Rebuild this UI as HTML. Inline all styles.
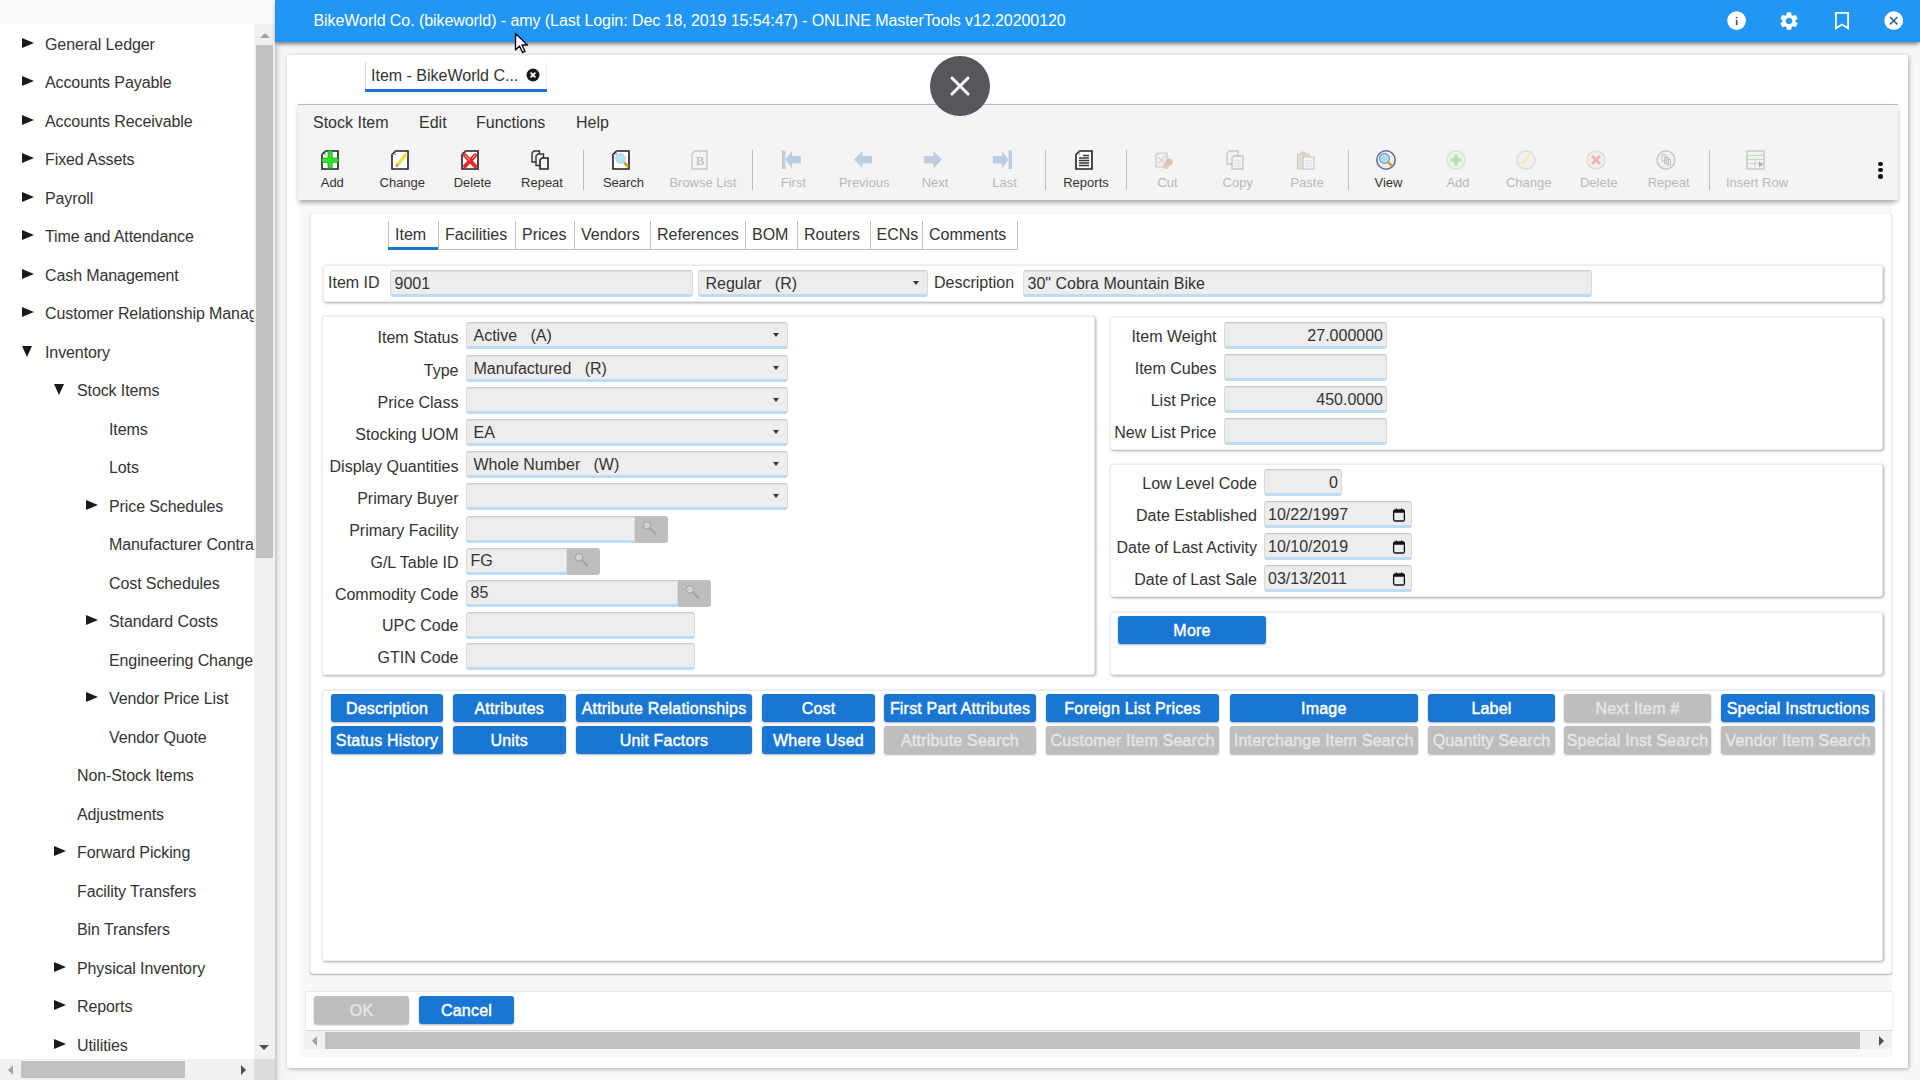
<!DOCTYPE html>
<html><head><meta charset="utf-8"><style>

*{box-sizing:border-box;margin:0;padding:0}
html,body{width:1920px;height:1080px;overflow:hidden}
body{position:relative;background:#f7f7f7;font-family:"Liberation Sans",sans-serif;font-size:16px;color:#333}
.abs{position:absolute}
/* sidebar */
#side{position:absolute;left:0;top:0;width:275px;height:1080px;background:#fff;overflow:hidden}
#side .strip{position:absolute;left:0;top:0;width:275px;height:24px;background:#f9f9f9}
#side .it{position:absolute;white-space:nowrap;height:20px;line-height:20px;color:#333;letter-spacing:-0.1px}
#side .tri{position:absolute;width:0;height:0}
#side .tr{border-left:12px solid #1a1a1a;border-top:5.6px solid transparent;border-bottom:5.6px solid transparent}
#side .td{border-top:11.5px solid #1a1a1a;border-left:5.8px solid transparent;border-right:5.8px solid transparent}
#vs{position:absolute;left:254px;top:24px;width:21px;height:1035px;background:#f1f1f1}
#vthumb{position:absolute;left:256px;top:45px;width:17px;height:513px;background:#c1c1c1}
#hs{position:absolute;left:0;top:1059px;width:254px;height:21px;background:#f1f1f1}
#hthumb{position:absolute;left:21px;top:1061px;width:164px;height:17px;background:#c1c1c1}
#corner{position:absolute;left:254px;top:1059px;width:21px;height:21px;background:#dcdcdc}
#sideshadow{position:absolute;left:275px;top:0;width:12px;height:1080px;background:linear-gradient(to right,#c6c6c6 0,#e6e6e6 3px,#f4f4f4 6px,#f7f7f7 12px)}
/* header */
#hdr{position:absolute;left:275px;top:0;width:1645px;height:42px;background:#2196f3;box-shadow:0 3px 4px -1px rgba(0,0,0,.5);color:#fff;z-index:3}
#hdr .t{position:absolute;left:38.5px;top:11px;line-height:20px;white-space:nowrap;letter-spacing:-0.07px}
/* main panel */
#main{position:absolute;left:287px;top:55px;width:1621px;height:1013px;background:#fff;box-shadow:1px 1px 4px rgba(0,0,0,.3);border-radius:2px}
.panel{position:absolute;background:#fff;border-radius:3px;box-shadow:1px 1px 3px rgba(0,0,0,.35);border:1px solid #ececec}
.lbl{position:absolute;white-space:nowrap;line-height:20px;color:#333}
.r{text-align:right}
.inp{position:absolute;background:#ededed;border-radius:3px;border:1px solid #dadada;border-top-color:#cacaca;border-bottom:3px solid #bddcf4;box-shadow:inset 0 1px 1px rgba(0,0,0,.06);white-space:nowrap;line-height:22px;padding-top:1.5px;padding-left:3.5px;color:#333}
.inp.sel{padding-left:6.5px}
.sel::after{content:"";position:absolute;right:8px;top:10px;border-top:4px solid #333;border-left:3.5px solid transparent;border-right:3.5px solid transparent}
.lk{position:absolute;background:#bdbdbd;border-radius:0 3px 3px 0}
.btn{position:absolute;background:#1976d2;color:#fff;text-align:center;line-height:26px;padding-top:2px;border-radius:3px;white-space:nowrap;box-shadow:0 1px 2px rgba(0,0,0,.3);-webkit-text-stroke:0.45px #fff;letter-spacing:0.2px}
.btn.dis{-webkit-text-stroke:0.45px #e6e6e6}
.btn.dis{background:#bdbdbd;color:#e6e6e6}
/* toolbar */
.tb{position:absolute;text-align:center;font-size:13px;white-space:nowrap;color:#333}
.tb.d{color:#b8b8b8}
.sep{position:absolute;top:150px;width:1px;height:40px;background:#bcbcbc}
.tab{position:absolute;top:221px;height:29px;line-height:28px;text-align:left;padding-left:6px;white-space:nowrap;border-left:1px solid #c0c0c0;border-bottom:1px solid #c0c0c0;color:#333}

</style></head><body>
<div id="side"><div class="strip"></div>
<div class="it" style="left:45px;top:34.5px">General Ledger</div>
<div class="tri tr" style="left:21.5px;top:37.8px"></div>
<div class="it" style="left:45px;top:73.0px">Accounts Payable</div>
<div class="tri tr" style="left:21.5px;top:76.3px"></div>
<div class="it" style="left:45px;top:111.5px">Accounts Receivable</div>
<div class="tri tr" style="left:21.5px;top:114.8px"></div>
<div class="it" style="left:45px;top:150.0px">Fixed Assets</div>
<div class="tri tr" style="left:21.5px;top:153.3px"></div>
<div class="it" style="left:45px;top:188.5px">Payroll</div>
<div class="tri tr" style="left:21.5px;top:191.8px"></div>
<div class="it" style="left:45px;top:227.0px">Time and Attendance</div>
<div class="tri tr" style="left:21.5px;top:230.3px"></div>
<div class="it" style="left:45px;top:265.5px">Cash Management</div>
<div class="tri tr" style="left:21.5px;top:268.8px"></div>
<div class="it" style="left:45px;top:304.0px">Customer Relationship Management</div>
<div class="tri tr" style="left:21.5px;top:307.3px"></div>
<div class="it" style="left:45px;top:342.5px">Inventory</div>
<div class="tri td" style="left:21.5px;top:345.8px"></div>
<div class="it" style="left:77px;top:381.0px">Stock Items</div>
<div class="tri td" style="left:53.5px;top:384.3px"></div>
<div class="it" style="left:109px;top:419.5px">Items</div>
<div class="it" style="left:109px;top:458.0px">Lots</div>
<div class="it" style="left:109px;top:496.5px">Price Schedules</div>
<div class="tri tr" style="left:85.5px;top:499.8px"></div>
<div class="it" style="left:109px;top:535.0px">Manufacturer Contracts</div>
<div class="it" style="left:109px;top:573.5px">Cost Schedules</div>
<div class="it" style="left:109px;top:612.0px">Standard Costs</div>
<div class="tri tr" style="left:85.5px;top:615.3px"></div>
<div class="it" style="left:109px;top:650.5px">Engineering Change</div>
<div class="it" style="left:109px;top:689.0px">Vendor Price List</div>
<div class="tri tr" style="left:85.5px;top:692.3px"></div>
<div class="it" style="left:109px;top:727.5px">Vendor Quote</div>
<div class="it" style="left:77px;top:766.0px">Non-Stock Items</div>
<div class="it" style="left:77px;top:804.5px">Adjustments</div>
<div class="it" style="left:77px;top:843.0px">Forward Picking</div>
<div class="tri tr" style="left:53.5px;top:846.3px"></div>
<div class="it" style="left:77px;top:881.5px">Facility Transfers</div>
<div class="it" style="left:77px;top:920.0px">Bin Transfers</div>
<div class="it" style="left:77px;top:958.5px">Physical Inventory</div>
<div class="tri tr" style="left:53.5px;top:961.8px"></div>
<div class="it" style="left:77px;top:997.0px">Reports</div>
<div class="tri tr" style="left:53.5px;top:1000.3px"></div>
<div class="it" style="left:77px;top:1035.5px">Utilities</div>
<div class="tri tr" style="left:53.5px;top:1038.8px"></div>
</div>
<div id="vs"></div><div id="vthumb"></div>
<div id="hs"></div><div id="hthumb"></div><div id="corner"></div>
<div class="abs" style="left:260px;top:33px;width:0;height:0;border-bottom:5px solid #a3a3a3;border-left:5px solid transparent;border-right:5px solid transparent"></div>
<div class="abs" style="left:259px;top:1045px;width:0;height:0;border-top:5px solid #505050;border-left:5px solid transparent;border-right:5px solid transparent"></div>
<div class="abs" style="left:8px;top:1065px;width:0;height:0;border-right:5px solid #a3a3a3;border-top:5px solid transparent;border-bottom:5px solid transparent"></div>
<div class="abs" style="left:241px;top:1065px;width:0;height:0;border-left:5px solid #505050;border-top:5px solid transparent;border-bottom:5px solid transparent"></div>
<div id="sideshadow"></div>
<div id="hdr"><div class="t">BikeWorld Co. (bikeworld) - amy (Last Login: Dec 18, 2019 15:54:47) - ONLINE MasterTools v12.20200120</div>
<svg class="abs" style="left:1452px;top:11px" width="20" height="20" viewBox="0 0 20 20"><circle cx="9.6" cy="9.6" r="9.4" fill="#fff"/><rect x="8.85" y="8.9" width="1.6" height="5.2" fill="#2a5a86"/><circle cx="9.65" cy="6.6" r="0.95" fill="#2a5a86"/></svg>
<svg class="abs" style="left:1503px;top:9.6px" width="22" height="22" viewBox="0 0 24 24"><path fill="#fff" d="M19.14 12.94c.04-.3.06-.61.06-.94 0-.32-.02-.64-.07-.94l2.03-1.58a.49.49 0 0 0 .12-.61l-1.92-3.32a.488.488 0 0 0-.59-.22l-2.39.96c-.5-.38-1.03-.7-1.62-.94l-.36-2.54a.484.484 0 0 0-.48-.41h-3.84c-.24 0-.43.17-.47.41l-.36 2.54c-.59.24-1.13.57-1.62.94l-2.39-.96c-.22-.08-.47 0-.59.22L2.74 8.87c-.12.21-.08.47.12.61l2.03 1.58c-.05.3-.09.63-.09.94s.02.64.07.94l-2.03 1.58a.49.49 0 0 0-.12.61l1.92 3.32c.12.22.37.29.59.22l2.39-.96c.5.38 1.03.7 1.62.94l.36 2.54c.05.24.24.41.48.41h3.84c.24 0 .44-.17.47-.41l.36-2.54c.59-.24 1.13-.56 1.62-.94l2.39.96c.22.08.47 0 .59-.22l1.92-3.32c.12-.22.07-.47-.12-.61l-2.01-1.58zM12 15.6c-1.98 0-3.6-1.62-3.6-3.6s1.62-3.6 3.6-3.6 3.6 1.62 3.6 3.6-1.62 3.6-3.6 3.6z"/></svg>
<svg class="abs" style="left:1559.5px;top:12px" width="14" height="17.5" viewBox="0 0 14 17.5"><path fill="none" stroke="#fff" stroke-width="1.8" d="M0.9 0.9H13.1V16.3L7 12.6L0.9 16.3Z"/></svg>
<svg class="abs" style="left:1609px;top:11px" width="20" height="20" viewBox="0 0 20 20"><circle cx="9.7" cy="9.7" r="9.4" fill="#fff"/><path d="M6 6L13.4 13.4M13.4 6L6 13.4" stroke="#2a6598" stroke-width="1.5"/></svg>
</div>
<svg class="abs" style="left:514px;top:32px;z-index:20" width="14" height="22" viewBox="0 0 14 22"><path d="M1.5 1.5V18L5.5 14L8.5 20.5L11 19.3L8 13H13.5Z" fill="#fff" stroke="#0a0a1e" stroke-width="1.4" stroke-linejoin="round"/></svg>
<div id="main"></div>
<div class="abs" style="left:365px;top:62px;width:182px;height:28px;border-left:1px solid #d8d8d8;border-right:1px solid #ececec"></div>
<div class="abs" style="left:365px;top:89px;width:182px;height:3px;background:#1976d2"></div>
<div class="lbl" style="left:371px;top:66px">Item - BikeWorld C...</div>
<svg class="abs" style="left:526px;top:68px" width="14" height="14" viewBox="0 0 14 14"><circle cx="7" cy="7" r="6.5" fill="#1a1a1a"/><path d="M4.6 4.6L9.4 9.4M9.4 4.6L4.6 9.4" stroke="#fff" stroke-width="1.8"/></svg>
<div class="abs" style="left:299px;top:200px;width:1593px;height:857px;background:#f8f8f8"></div>
<div class="abs" style="left:298px;top:104px;width:1600px;height:96px;background:#f4f4f4;border-top:1px solid #bbb;box-shadow:0 3px 5px -1px rgba(0,0,0,.38)"></div>
<div class="lbl" style="left:313px;top:113px">Stock Item</div>
<div class="lbl" style="left:419px;top:113px">Edit</div>
<div class="lbl" style="left:476px;top:113px">Functions</div>
<div class="lbl" style="left:576px;top:113px">Help</div>
<svg class="abs" style="left:321px;top:150px" width="18" height="20" viewBox="0 0 18 20"><path d="M4.5 1H17V19H1V4.5Z" fill="#fff" stroke="#1e1e1e" stroke-width="1.6"/><path d="M1.2 4.6H4.6V1.2" fill="none" stroke="#999" stroke-width="0.9"/><path d="M9.1 2.6V16.4M2.8 10.2H15.4" stroke="#15a015" stroke-width="5" stroke-linecap="round"/><path d="M9.1 2.6V16.4M2.8 10.2H15.4" stroke="#2ee22e" stroke-width="3.4" stroke-linecap="round"/></svg>
<div class="tb" style="left:282.3px;top:175px;width:100px;line-height:16px">Add</div>
<svg class="abs" style="left:391px;top:150px" width="18" height="20" viewBox="0 0 18 20"><path d="M4.5 1H17V19H1V4.5Z" fill="#fff" stroke="#1e1e1e" stroke-width="1.6"/><path d="M1.2 4.6H4.6V1.2" fill="none" stroke="#999" stroke-width="0.9"/><path d="M6 15.5L15.5 3.5" stroke="#f0e040" stroke-width="3.6"/><path d="M5.2 16.8L6.4 14.2" stroke="#888" stroke-width="1.6"/></svg>
<div class="tb" style="left:352.3px;top:175px;width:100px;line-height:16px">Change</div>
<svg class="abs" style="left:461px;top:150px" width="18" height="20" viewBox="0 0 18 20"><path d="M4.5 1H17V19H1V4.5Z" fill="#fff" stroke="#1e1e1e" stroke-width="1.6"/><path d="M1.2 4.6H4.6V1.2" fill="none" stroke="#999" stroke-width="0.9"/><path d="M4 5.3L14.2 16.2M14.2 5.3L4 16.2" stroke="#ec2626" stroke-width="4" stroke-linecap="round"/><path d="M4.2 5.5L8.5 10M14 5.5L11.5 8.2" stroke="#ff8a8a" stroke-width="1.2" stroke-linecap="round"/></svg>
<div class="tb" style="left:422.5px;top:175px;width:100px;line-height:16px">Delete</div>
<svg class="abs" style="left:531px;top:150px" width="18" height="20" viewBox="0 0 18 20"><path d="M3 1H8.5V12H1V3Z" fill="#eee" stroke="#333" stroke-width="1.4"/><path d="M7 4H12.5V15.5H5V6Z" fill="#eee" stroke="#333" stroke-width="1.4"/><path d="M11 8H17V19H9V10Z" fill="#f4f4f4" stroke="#222" stroke-width="1.6"/></svg>
<div class="tb" style="left:492.0px;top:175px;width:100px;line-height:16px">Repeat</div>
<svg class="abs" style="left:612px;top:150px" width="18" height="20" viewBox="0 0 18 20"><path d="M4.5 1H17V19H1V4.5Z" fill="#fff" stroke="#1e1e1e" stroke-width="1.6"/><path d="M1.2 4.6H4.6V1.2" fill="none" stroke="#999" stroke-width="0.9"/><circle cx="8.5" cy="8.5" r="4.8" fill="#b8e4f8" stroke="#9cc8e0" stroke-width="0.8"/><path d="M12 12.5L16.5 17" stroke="#c8a030" stroke-width="2.6"/></svg>
<div class="tb" style="left:573.5px;top:175px;width:100px;line-height:16px">Search</div>
<svg class="abs" style="left:691px;top:150px" width="17" height="20" viewBox="0 0 17 20"><path d="M4 1H16V19H1V4Z" fill="#f4f4f4" stroke="#c8c8c8" stroke-width="1.4"/><text x="9" y="15" font-family="Liberation Serif" font-size="13" font-weight="bold" fill="#c4c4c4" text-anchor="middle">B</text></svg>
<div class="tb d" style="left:653.0px;top:175px;width:100px;line-height:16px">Browse List</div>
<svg class="abs" style="left:781px;top:150px" width="20" height="20" viewBox="0 0 20 20"><rect x="1" y="0.5" width="3.5" height="18.5" fill="#bccde0"/><path d="M4.5 9.5L11 1V6H20V13.5H11V18.5Z" fill="#bccde0"/></svg>
<div class="tb d" style="left:743.4px;top:175px;width:100px;line-height:16px">First</div>
<svg class="abs" style="left:853px;top:150px" width="19" height="20" viewBox="0 0 19 20"><path d="M1 9.5L9.5 1V6H19V13.5H9.5V18.5Z" fill="#bccde0"/></svg>
<div class="tb d" style="left:814.2px;top:175px;width:100px;line-height:16px">Previous</div>
<svg class="abs" style="left:923px;top:150px" width="19" height="20" viewBox="0 0 19 20"><path d="M19 9.5L10.5 1V6H1V13.5H10.5V18.5Z" fill="#bccde0"/></svg>
<div class="tb d" style="left:885.0px;top:175px;width:100px;line-height:16px">Next</div>
<svg class="abs" style="left:993px;top:150px" width="19" height="20" viewBox="0 0 19 20"><rect x="15.5" y="0.5" width="3.5" height="18.5" fill="#bccde0"/><path d="M15.5 9.5L9 1V6H0V13.5H9V18.5Z" fill="#bccde0"/></svg>
<div class="tb d" style="left:954.5px;top:175px;width:100px;line-height:16px">Last</div>
<svg class="abs" style="left:1075px;top:150px" width="18" height="20" viewBox="0 0 18 20"><path d="M4.5 1H17V19H1V4.5Z" fill="#fff" stroke="#1e1e1e" stroke-width="1.6"/><path d="M1.2 4.6H4.6V1.2" fill="none" stroke="#999" stroke-width="0.9"/><path d="M4 8H14M4 10.5H14M4 13H14M4 15.5H14M8 5.5H14" stroke="#333" stroke-width="1.3"/></svg>
<div class="tb" style="left:1036.0px;top:175px;width:100px;line-height:16px">Reports</div>
<svg class="abs" style="left:1155px;top:150px" width="18" height="20" viewBox="0 0 18 20"><path d="M3 3H12V17H1V5Z" fill="#efefef" stroke="#c8c8c8" stroke-width="1.2"/><path d="M4 8L10 13M4 13L10 6" stroke="#c8c8c8" stroke-width="1"/><circle cx="14" cy="12" r="3.6" fill="#dcc0b0"/><circle cx="11" cy="16" r="3" fill="#e0c8b8"/></svg>
<div class="tb d" style="left:1117.5px;top:175px;width:100px;line-height:16px">Cut</div>
<svg class="abs" style="left:1226px;top:150px" width="18" height="20" viewBox="0 0 18 20"><path d="M3 1H12V14H1V3Z" fill="#f2f2f2" stroke="#c8c8c8" stroke-width="1.3"/><path d="M8 6H17V19H6V8Z" fill="#f4f4f4" stroke="#c4c4c4" stroke-width="1.3"/><path d="M8.5 11H15M8.5 13.5H15M8.5 16H15" stroke="#ddd" stroke-width="1"/></svg>
<div class="tb d" style="left:1187.8px;top:175px;width:100px;line-height:16px">Copy</div>
<svg class="abs" style="left:1296px;top:150px" width="19" height="20" viewBox="0 0 19 20"><path d="M1.5 4H13V19H1.5Z" fill="#e4ddd4" stroke="#d0c8c0" stroke-width="1.2"/><rect x="4.5" y="1.5" width="5" height="4" rx="1" fill="#d8d0c8"/><path d="M7 7H18V19H7Z" fill="#f4f4f4" stroke="#c8c8c8" stroke-width="1.2"/><path d="M9 11H16M9 13.5H16M9 16H16" stroke="#ddd" stroke-width="1"/></svg>
<div class="tb d" style="left:1257.0px;top:175px;width:100px;line-height:16px">Paste</div>
<svg class="abs" style="left:1376px;top:150px" width="20" height="20" viewBox="0 0 20 20"><circle cx="10" cy="10" r="9.2" fill="#f0f0f8" stroke="#6a6a9a" stroke-width="1.6"/><circle cx="8.5" cy="8.5" r="5" fill="#a8ddf5" stroke="#5a8aa8" stroke-width="1"/><path d="M12 12L16 16" stroke="#d0a040" stroke-width="2.6"/></svg>
<div class="tb" style="left:1338.5px;top:175px;width:100px;line-height:16px">View</div>
<svg class="abs" style="left:1446px;top:150px" width="20" height="20" viewBox="0 0 20 20"><g opacity="1.0"><circle cx="10" cy="10" r="9" fill="#f0f0f0" stroke="#d8e0d8" stroke-width="1.6"/><path d="M10 4.5V15.5M4.5 10H15.5" stroke="#a8e8a8" stroke-width="3.6"/></g></svg>
<div class="tb d" style="left:1408.0px;top:175px;width:100px;line-height:16px">Add</div>
<svg class="abs" style="left:1516px;top:150px" width="20" height="20" viewBox="0 0 20 20"><g opacity="1.0"><circle cx="10" cy="10" r="9" fill="#f0f0f0" stroke="#dcdce4" stroke-width="1.6"/><path d="M6.5 14L13.5 5" stroke="#f0eab8" stroke-width="3"/></g></svg>
<div class="tb d" style="left:1478.7px;top:175px;width:100px;line-height:16px">Change</div>
<svg class="abs" style="left:1586px;top:150px" width="20" height="20" viewBox="0 0 20 20"><g opacity="1.0"><circle cx="10" cy="10" r="9" fill="#f0f0f0" stroke="#e8d8d8" stroke-width="1.6"/><path d="M6 6L14 14M14 6L6 14" stroke="#f0b8b8" stroke-width="3"/></g></svg>
<div class="tb d" style="left:1548.7px;top:175px;width:100px;line-height:16px">Delete</div>
<svg class="abs" style="left:1656px;top:150px" width="20" height="20" viewBox="0 0 20 20"><g opacity="1.0"><circle cx="10" cy="10" r="9" fill="#f0f0f0" stroke="#c8c8c8" stroke-width="1.6"/><path d="M6 5H10V11H6Z M8.5 7.5H12.5V13.5H8.5Z M11 9.5H14.5V15H11Z" fill="#f0f0f0" stroke="#c0c0c0" stroke-width="1"/></g></svg>
<div class="tb d" style="left:1618.7px;top:175px;width:100px;line-height:16px">Repeat</div>
<svg class="abs" style="left:1746px;top:150px" width="19" height="20" viewBox="0 0 19 20"><rect x="1" y="1" width="17" height="18" fill="#f0f4f0" stroke="#c0c8c0" stroke-width="1.4"/><path d="M1 5.5H18M1 9.5H18" stroke="#b8e0b8" stroke-width="1.2"/><path d="M1 13.5H18M9 9.5V19" stroke="#d0d0d0" stroke-width="1"/><path d="M13 11.5L17 14.5L13 17.5Z" fill="#a8a8a8"/></svg>
<div class="tb d" style="left:1707.0px;top:175px;width:100px;line-height:16px">Insert Row</div>
<div class="sep" style="left:583.0px"></div>
<div class="sep" style="left:752.0px"></div>
<div class="sep" style="left:1045.0px"></div>
<div class="sep" style="left:1125.8px"></div>
<div class="sep" style="left:1347.5px"></div>
<div class="sep" style="left:1709.0px"></div>
<div class="abs" style="left:1878.3px;top:161.7px;width:4.6px;height:4.6px;border-radius:50%;background:#111"></div>
<div class="abs" style="left:1878.3px;top:167.7px;width:4.6px;height:4.6px;border-radius:50%;background:#111"></div>
<div class="abs" style="left:1878.3px;top:174.1px;width:4.6px;height:4.6px;border-radius:50%;background:#111"></div>
<div class="abs" style="left:930px;top:56px;width:60px;height:60px;border-radius:50%;background:#55575c;z-index:5"><svg width="60" height="60" viewBox="0 0 60 60"><path d="M22 22L38 38M38 22L22 38" stroke="#fff" stroke-width="3" stroke-linecap="round"/></svg></div>
<div class="panel" style="left:310px;top:213px;width:1582px;height:761px;border-color:#f0f0f0;box-shadow:0 1px 1.5px rgba(0,0,0,.3)"></div>
<div class="tab" style="left:388px;width:50.0px">Item</div>
<div class="tab" style="left:438px;width:77.0px">Facilities</div>
<div class="tab" style="left:515px;width:59.0px">Prices</div>
<div class="tab" style="left:574px;width:76.0px">Vendors</div>
<div class="tab" style="left:650px;width:95.0px">References</div>
<div class="tab" style="left:745px;width:52.0px">BOM</div>
<div class="tab" style="left:797px;width:72.5px">Routers</div>
<div class="tab" style="left:869.5px;width:52.5px">ECNs</div>
<div class="tab" style="left:922px;width:95.0px">Comments</div>
<div class="abs" style="left:1017px;top:221px;width:1px;height:29px;background:#c0c0c0"></div>
<div class="abs" style="left:388px;top:247px;width:50px;height:2.7px;background:#1976d2"></div>
<div class="panel" style="left:323px;top:265px;width:1560px;height:37px"></div>
<div class="lbl" style="left:328px;top:273px">Item ID</div>
<div class="inp" style="left:390px;top:270px;width:303px;height:27px">9001</div>
<div class="inp sel" style="left:698px;top:270px;width:230px;height:27px">Regular&nbsp;&nbsp;&nbsp;(R)</div>
<div class="lbl" style="left:934px;top:273px">Description</div>
<div class="inp" style="left:1023px;top:270px;width:569px;height:27px">30" Cobra Mountain Bike</div>
<div class="panel" style="left:322px;top:316px;width:773px;height:359px"></div>
<div class="lbl r" style="left:258.5px;width:200px;top:327.5px">Item Status</div>
<div class="inp sel" style="left:466px;top:322px;width:322px;height:27px">Active&nbsp;&nbsp;&nbsp;(A)</div>
<div class="lbl r" style="left:258.5px;width:200px;top:360.5px">Type</div>
<div class="inp sel" style="left:466px;top:355px;width:322px;height:27px">Manufactured&nbsp;&nbsp;&nbsp;(R)</div>
<div class="lbl r" style="left:258.5px;width:200px;top:392.5px">Price Class</div>
<div class="inp sel" style="left:466px;top:387px;width:322px;height:27px"></div>
<div class="lbl r" style="left:258.5px;width:200px;top:424.5px">Stocking UOM</div>
<div class="inp sel" style="left:466px;top:419px;width:322px;height:27px">EA</div>
<div class="lbl r" style="left:258.5px;width:200px;top:456.5px">Display Quantities</div>
<div class="inp sel" style="left:466px;top:451px;width:322px;height:27px">Whole Number&nbsp;&nbsp;&nbsp;(W)</div>
<div class="lbl r" style="left:258.5px;width:200px;top:488.5px">Primary Buyer</div>
<div class="inp sel" style="left:466px;top:483px;width:322px;height:27px"></div>
<div class="lbl r" style="left:258.5px;width:200px;top:521.0px">Primary Facility</div>
<div class="inp" style="left:466px;top:515.5px;width:169px;height:27px;border-radius:3px 0 0 3px"></div>
<div class="lk" style="left:635px;top:515.5px;width:32.5px;height:27px"><svg width="32" height="27" viewBox="0 0 32 27"><path d="M15 12.5L20.5 17.8" stroke="#a4a4a4" stroke-width="2.2" stroke-linecap="round"/><circle cx="12" cy="9.3" r="3.6" fill="#d2d2d2" stroke="#a8a8a8" stroke-width="1.2"/></svg></div>
<div class="lbl r" style="left:258.5px;width:200px;top:553.0px">G/L Table ID</div>
<div class="inp" style="left:466px;top:547.5px;width:101px;height:27px;border-radius:3px 0 0 3px">FG</div>
<div class="lk" style="left:567px;top:547.5px;width:32.6px;height:27px"><svg width="32" height="27" viewBox="0 0 32 27"><path d="M15 12.5L20.5 17.8" stroke="#a4a4a4" stroke-width="2.2" stroke-linecap="round"/><circle cx="12" cy="9.3" r="3.6" fill="#d2d2d2" stroke="#a8a8a8" stroke-width="1.2"/></svg></div>
<div class="lbl r" style="left:258.5px;width:200px;top:585.0px">Commodity Code</div>
<div class="inp" style="left:466px;top:579.5px;width:212px;height:27px;border-radius:3px 0 0 3px">85</div>
<div class="lk" style="left:678px;top:579.5px;width:32.5px;height:27px"><svg width="32" height="27" viewBox="0 0 32 27"><path d="M15 12.5L20.5 17.8" stroke="#a4a4a4" stroke-width="2.2" stroke-linecap="round"/><circle cx="12" cy="9.3" r="3.6" fill="#d2d2d2" stroke="#a8a8a8" stroke-width="1.2"/></svg></div>
<div class="lbl r" style="left:258.5px;width:200px;top:616.0px">UPC Code</div>
<div class="inp" style="left:466px;top:611.5px;width:229px;height:27px"></div>
<div class="lbl r" style="left:258.5px;width:200px;top:647.5px">GTIN Code</div>
<div class="inp" style="left:466px;top:643px;width:229px;height:27px"></div>
<div class="panel" style="left:1110px;top:317px;width:773px;height:133px"></div>
<div class="lbl r" style="left:1016.5px;width:200px;top:326.5px">Item Weight</div>
<div class="inp" style="left:1224px;top:322px;width:163px;height:27px;text-align:right;padding-right:3px">27.000000</div>
<div class="lbl r" style="left:1016.5px;width:200px;top:358.5px">Item Cubes</div>
<div class="inp" style="left:1224px;top:354px;width:163px;height:27px;text-align:right;padding-right:3px"></div>
<div class="lbl r" style="left:1016.5px;width:200px;top:390.5px">List Price</div>
<div class="inp" style="left:1224px;top:386px;width:163px;height:27px;text-align:right;padding-right:3px">450.0000</div>
<div class="lbl r" style="left:1016.5px;width:200px;top:422.5px">New List Price</div>
<div class="inp" style="left:1224px;top:418px;width:163px;height:27px;text-align:right;padding-right:3px"></div>
<div class="panel" style="left:1110px;top:464px;width:773px;height:133px"></div>
<div class="lbl r" style="left:1057px;width:200px;top:474px">Low Level Code</div>
<div class="inp" style="left:1264px;top:469px;width:78px;height:27px;text-align:right;padding-right:3px">0</div>
<div class="lbl r" style="left:1057px;width:200px;top:505.5px">Date Established</div>
<div class="inp" style="left:1264px;top:501px;width:148px;height:27px;padding-left:3px">10/22/1997<svg class="abs" style="right:5.5px;top:4.5px" width="14" height="15" viewBox="0 0 14 15"><rect x="1.6" y="3" width="10.8" height="11" rx="1.6" fill="none" stroke="#111" stroke-width="1.3"/><rect x="1.6" y="3" width="10.8" height="2.8" rx="1" fill="#111"/><path d="M4.4 1.4V3.6M9.6 1.4V3.6" stroke="#111" stroke-width="1.3"/></svg></div>
<div class="lbl r" style="left:1057px;width:200px;top:537.5px">Date of Last Activity</div>
<div class="inp" style="left:1264px;top:533px;width:148px;height:27px;padding-left:3px">10/10/2019<svg class="abs" style="right:5.5px;top:4.5px" width="14" height="15" viewBox="0 0 14 15"><rect x="1.6" y="3" width="10.8" height="11" rx="1.6" fill="none" stroke="#111" stroke-width="1.3"/><rect x="1.6" y="3" width="10.8" height="2.8" rx="1" fill="#111"/><path d="M4.4 1.4V3.6M9.6 1.4V3.6" stroke="#111" stroke-width="1.3"/></svg></div>
<div class="lbl r" style="left:1057px;width:200px;top:569.5px">Date of Last Sale</div>
<div class="inp" style="left:1264px;top:565px;width:148px;height:27px;padding-left:3px">03/13/2011<svg class="abs" style="right:5.5px;top:4.5px" width="14" height="15" viewBox="0 0 14 15"><rect x="1.6" y="3" width="10.8" height="11" rx="1.6" fill="none" stroke="#111" stroke-width="1.3"/><rect x="1.6" y="3" width="10.8" height="2.8" rx="1" fill="#111"/><path d="M4.4 1.4V3.6M9.6 1.4V3.6" stroke="#111" stroke-width="1.3"/></svg></div>
<div class="panel" style="left:1110px;top:612px;width:773px;height:63px"></div>
<div class="btn" style="left:1118px;top:616px;width:148px;height:28px">More</div>
<div class="panel" style="left:322px;top:690px;width:1561px;height:271px"></div>
<div class="btn" style="left:331px;top:694px;width:112.0px;height:27.5px">Description</div>
<div class="btn" style="left:453px;top:694px;width:112.5px;height:27.5px">Attributes</div>
<div class="btn" style="left:576px;top:694px;width:176.0px;height:27.5px">Attribute Relationships</div>
<div class="btn" style="left:762px;top:694px;width:113.0px;height:27.5px">Cost</div>
<div class="btn" style="left:884px;top:694px;width:152.0px;height:27.5px">First Part Attributes</div>
<div class="btn" style="left:1046px;top:694px;width:173.0px;height:27.5px">Foreign List Prices</div>
<div class="btn" style="left:1229.5px;top:694px;width:188.5px;height:27.5px">Image</div>
<div class="btn" style="left:1428px;top:694px;width:127.0px;height:27.5px">Label</div>
<div class="btn dis" style="left:1564px;top:694px;width:147.0px;height:27.5px">Next Item #</div>
<div class="btn" style="left:1721px;top:694px;width:154.0px;height:27.5px">Special Instructions</div>
<div class="btn" style="left:331px;top:726px;width:112.0px;height:28px">Status History</div>
<div class="btn" style="left:453px;top:726px;width:112.5px;height:28px">Units</div>
<div class="btn" style="left:576px;top:726px;width:176.0px;height:28px">Unit Factors</div>
<div class="btn" style="left:762px;top:726px;width:113.0px;height:28px">Where Used</div>
<div class="btn dis" style="left:884px;top:726px;width:152.0px;height:28px">Attribute Search</div>
<div class="btn dis" style="left:1046px;top:726px;width:173.0px;height:28px">Customer Item Search</div>
<div class="btn dis" style="left:1229.5px;top:726px;width:188.5px;height:28px">Interchange Item Search</div>
<div class="btn dis" style="left:1428px;top:726px;width:127.0px;height:28px">Quantity Search</div>
<div class="btn dis" style="left:1564px;top:726px;width:147.0px;height:28px">Special Inst Search</div>
<div class="btn dis" style="left:1721px;top:726px;width:154.0px;height:28px">Vendor Item Search</div>
<div class="abs" style="left:306px;top:991px;width:1586px;height:39px;background:#fff;border-top:1px solid #e8e8e8;box-shadow:0 1px 2px rgba(0,0,0,.2)"></div>
<div class="btn dis" style="left:314px;top:996px;width:95px;height:28px">OK</div>
<div class="btn" style="left:419px;top:996px;width:95px;height:28px">Cancel</div>
<div class="abs" style="left:304px;top:1031px;width:1588px;height:18px;background:#f1f1f1"></div>
<div class="abs" style="left:325px;top:1032px;width:1535px;height:17px;background:#c1c1c1"></div>
<div class="abs" style="left:312px;top:1036px;width:0;height:0;border-right:5px solid #a3a3a3;border-top:5px solid transparent;border-bottom:5px solid transparent"></div>
<div class="abs" style="left:1879px;top:1036px;width:0;height:0;border-left:5px solid #505050;border-top:5px solid transparent;border-bottom:5px solid transparent"></div>
</body></html>
